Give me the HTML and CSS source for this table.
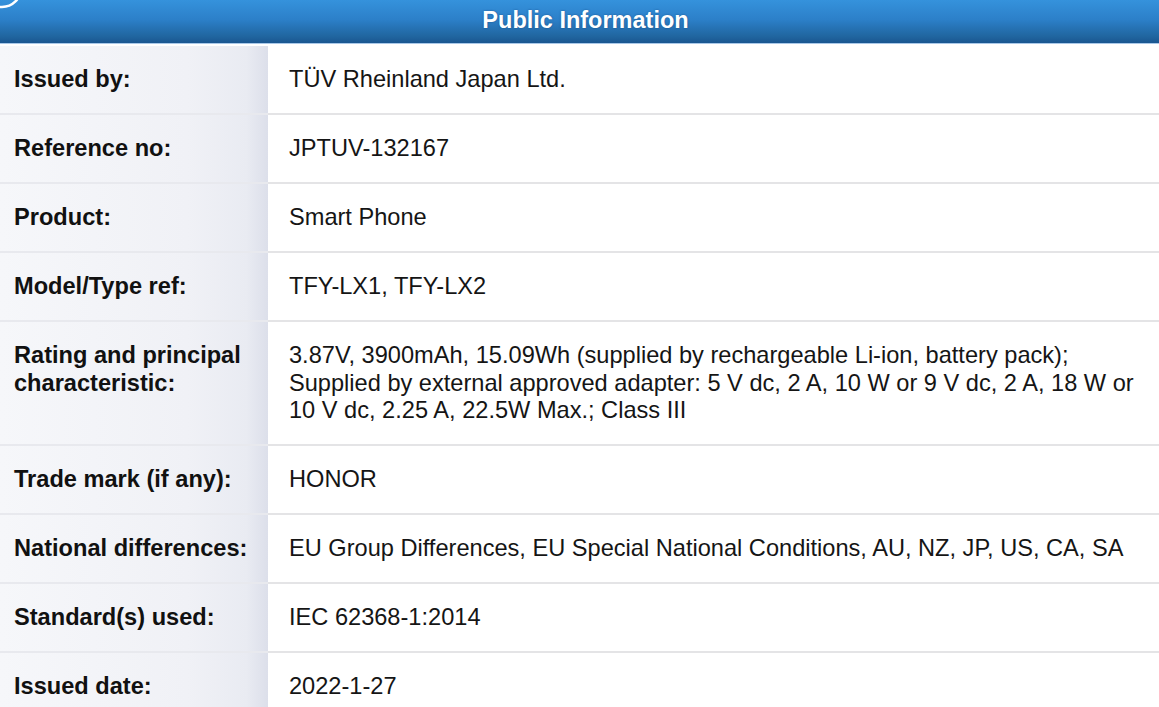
FILE: index.html
```html
<!DOCTYPE html>
<html lang="en">
<head>
<meta charset="utf-8">
<title>Public Information</title>
<link rel="stylesheet" href="styles.css">
</head>
<body>
<div class="page">
  <div class="header">
    <svg class="corner-icon" width="40" height="30" viewBox="0 0 40 30" aria-hidden="true">
      <circle cx="2" cy="-12" r="19" fill="none" stroke="#ffffff" stroke-width="2.5"/>
    </svg>
    <h1 class="title">Public Information</h1>
  </div>
  <table class="info">
    <tbody>
      <tr><th>Issued by:</th><td>TÜV Rheinland Japan Ltd.</td></tr>
      <tr><th>Reference no:</th><td>JPTUV-132167</td></tr>
      <tr><th>Product:</th><td>Smart Phone</td></tr>
      <tr><th>Model/Type ref:</th><td>TFY-LX1, TFY-LX2</td></tr>
      <tr><th>Rating and principal characteristic:</th><td>3.87V, 3900mAh, 15.09Wh (supplied by rechargeable Li-ion, battery pack);<br>Supplied by external approved adapter: 5 V dc, 2 A, 10 W or 9 V dc, 2 A, 18 W or 10 V dc, 2.25 A, 22.5W Max.; Class III</td></tr>
      <tr><th>Trade mark (if any):</th><td>HONOR</td></tr>
      <tr><th>National differences:</th><td>EU Group Differences, EU Special National Conditions, AU, NZ, JP, US, CA, SA</td></tr>
      <tr><th>Standard(s) used:</th><td>IEC 62368-1:2014</td></tr>
      <tr><th>Issued date:</th><td>2022-1-27</td></tr>
    </tbody>
  </table>
</div>
</body>
</html>
```

FILE: styles.css
```css
html, body {
  margin: 0;
  padding: 0;
  background: #ffffff;
}

body {
  font-family: "Liberation Sans", Arial, Helvetica, sans-serif;
  color: #111111;
}

.page {
  width: 1159px;
  overflow: hidden;
}

.header {
  position: relative;
  height: 43px;
  background: linear-gradient(to bottom, #3592dc 0%, #2c80c9 45%, #20659f 85%, #1a5690 100%);
  border-bottom: 1px solid #a9c8e8;
  display: flex;
  align-items: center;
  justify-content: center;
}

.corner-icon {
  position: absolute;
  left: 0;
  top: 0;
}

.title {
  margin: 0 0 4px 0;
  font-size: 23.5px;
  font-weight: bold;
  color: #ffffff;
  line-height: 30px;
  padding-left: 12px;
  text-shadow: 0 0 2px rgba(10, 50, 100, 0.6);
}

.info {
  width: 100%;
  margin-top: 2px;
  border-collapse: collapse;
  table-layout: fixed;
}

.info th,
.info td {
  font-size: 23.6px;
  line-height: 27.5px;
  padding: 20px 20px 19.5px 21px;
  text-align: left;
  vertical-align: top;
  border-bottom: 2px solid #e4e4e6;
}

.info th {
  width: 244px;
  padding-left: 14px;
  padding-right: 10px;
  font-weight: bold;
  color: #111111;
  background: linear-gradient(to right, #f6f7fa 0%, #f0f1f6 70%, #e9ebf2 92%, #dcdfea 100%);
  border-bottom-color: #e8e9ee;
}

.info td {
  font-weight: normal;
  color: #151515;
}
```
